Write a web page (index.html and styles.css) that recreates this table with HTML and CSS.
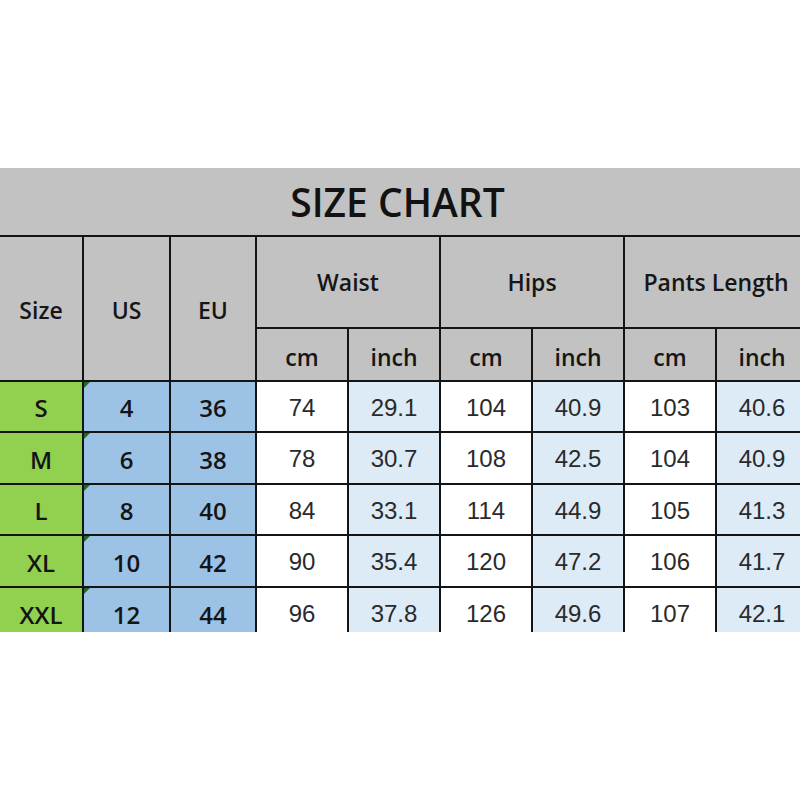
FILE: index.html
```html
<!DOCTYPE html>
<html>
<head>
<meta charset="utf-8">
<link rel="stylesheet" href="styles.css">
</head>
<body>
<div class="frame">
  <div class="chart">
    <div class="title">SIZE CHART</div>

    <div class="h tall">Size</div>
    <div class="h tall">US</div>
    <div class="h tall">EU</div>
    <div class="h wide">Waist</div>
    <div class="h wide">Hips</div>
    <div class="h wide">Pants Length</div>
    <div class="h sub">cm</div>
    <div class="h sub">inch</div>
    <div class="h sub">cm</div>
    <div class="h sub">inch</div>
    <div class="h sub">cm</div>
    <div class="h sub">inch</div>

    <div class="c size">S</div><div class="c us">4</div><div class="c eu">36</div>
    <div class="c w">74</div><div class="c lb">29.1</div><div class="c w">104</div><div class="c lb">40.9</div><div class="c w">103</div><div class="c lb">40.6</div>

    <div class="c size">M</div><div class="c us">6</div><div class="c eu">38</div>
    <div class="c w">78</div><div class="c lb">30.7</div><div class="c w">108</div><div class="c lb">42.5</div><div class="c w">104</div><div class="c lb">40.9</div>

    <div class="c size">L</div><div class="c us">8</div><div class="c eu">40</div>
    <div class="c w">84</div><div class="c lb">33.1</div><div class="c w">114</div><div class="c lb">44.9</div><div class="c w">105</div><div class="c lb">41.3</div>

    <div class="c size">XL</div><div class="c us">10</div><div class="c eu">42</div>
    <div class="c w">90</div><div class="c lb">35.4</div><div class="c w">120</div><div class="c lb">47.2</div><div class="c w">106</div><div class="c lb">41.7</div>

    <div class="c size">XXL</div><div class="c us">12</div><div class="c eu">44</div>
    <div class="c w">96</div><div class="c lb">37.8</div><div class="c w">126</div><div class="c lb">49.6</div><div class="c w">107</div><div class="c lb">42.1</div>
  </div>
</div>
</body>
</html>
```

FILE: styles.css
```css
html, body {
  margin: 0;
  padding: 0;
  background: #ffffff;
  overflow: hidden;
}

.frame {
  margin-top: 168px;
  width: 800px;
  height: 464px;
  overflow: hidden;
}

.chart {
  display: grid;
  width: 808px;
  grid-template-columns: 82px 85px 84px 90px 90px 90px 90px 90px 90px;
  grid-template-rows: 67px 90px 51px 49px 50px 49px 50px 50px;
  gap: 2px;
  background: #141414;
}

.title {
  grid-column: 1 / -1;
  background: #c2c2c2;
  display: flex;
  align-items: center;
  justify-content: center;
  padding-right: 12px;
  font-family: "Open Sans", "DejaVu Sans", sans-serif;
  font-weight: 600;
  font-size: 39px;
  color: #121212;
}

.h {
  background: #c2c2c2;
  display: flex;
  align-items: center;
  justify-content: center;
  font-family: "Open Sans", "DejaVu Sans", sans-serif;
  font-weight: 600;
  font-size: 23px;
  color: #161616;
}

.tall {
  grid-row: span 2;
  padding-top: 2px;
}

.wide {
  grid-column: span 2;
}

.sub {
  padding-top: 4px;
}

.c {
  display: flex;
  align-items: center;
  justify-content: center;
  font-family: "Liberation Sans", Arial, sans-serif;
  font-size: 24px;
  color: #2a2a2a;
  position: relative;
  padding-top: 2px;
}

.size, .us, .eu {
  font-family: "Open Sans", "DejaVu Sans", sans-serif;
  font-weight: 600;
  font-size: 24px;
  color: #141414;
}

.size { background: #92d050; }
.us, .eu { background: #9cc3e6; }
.w { background: #ffffff; }
.lb { background: #ddebf7; }

.us::before {
  content: "";
  position: absolute;
  left: 0;
  top: 0;
  width: 0;
  height: 0;
  border-top: 6px solid #1f6b26;
  border-right: 6px solid transparent;
}
```
